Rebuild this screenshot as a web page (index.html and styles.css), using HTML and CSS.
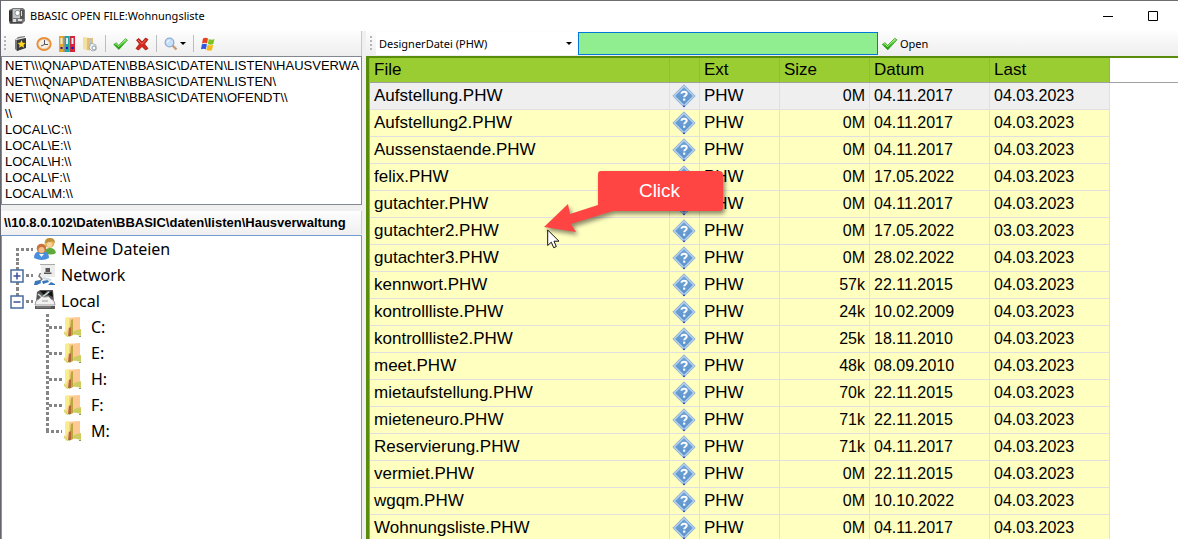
FILE: index.html
```html
<!DOCTYPE html>
<html lang="de">
<head>
<meta charset="utf-8">
<title>BBASIC OPEN FILE:Wohnungsliste</title>
<link rel="stylesheet" href="styles.css">
</head>
<body>
<svg class="defs" aria-hidden="true">
  <defs>
    <linearGradient id="gem" x1="0" y1="0" x2="0" y2="1"><stop offset="0" stop-color="#6ea3d6"/><stop offset="1" stop-color="#5c93cc"/></linearGradient>
    <linearGradient id="leaf" x1="0" y1="0" x2="0" y2="1"><stop offset="0" stop-color="#a5f07c"/><stop offset=".5" stop-color="#3cc21c"/><stop offset="1" stop-color="#1f8f12"/></linearGradient>
  </defs>
  <symbol id="help" viewBox="0 0 24 24">
    <path d="M12 .8 23.2 12 12 23.2.8 12Z" fill="#b4d0ec" stroke="#8fb0d4" stroke-width="1"/>
    <path d="M12 3.2 20.8 12 12 20.8 3.2 12Z" fill="url(#gem)"/>
    <path d="M11 21.5h2v1.5h-2z" fill="#3c55c0"/>
    <path d="M9.500 9.800c0-1.400 1-2.100 2.600-2.100s2.600.7 2.600 2c0 1.800-2.500 1.800-2.500 3.600" fill="none" stroke="#fff" stroke-width="2"/>
    <path d="M11.100 14.600h2.200v2.100h-2.200z" fill="#fff"/>
  </symbol>
  <symbol id="check" viewBox="0 0 16 14">
    <path d="M.8 7.500 3.600 5.700 6 8.600 13.300 1.300 15.400 2.800 6.300 12.800Z" fill="url(#leaf)" stroke="#2a9a1c" stroke-width=".8" stroke-linejoin="round"/>
    <path d="M2.300 7.300 3.500 6.600 6 9.700 13.300 2.400" fill="none" stroke="#c4f7a8" stroke-width=".8"/>
  </symbol>
  <symbol id="folder" viewBox="0 0 20 22">
    <path d="M2 2 17 1V18L3 20Z" fill="#ffc993"/>
    <path d="M2 2 6 1V10L3 17H2Z" fill="#f8ee8a"/>
    <path d="M8 4 10 3V19L6 21Z" fill="#b9a93c"/>
    <path d="M6 12 8 11V20H5Z" fill="#b0683a"/>
    <path d="M11 15 18 13V20L10 18Z" fill="#cccc60"/>
    <path d="M1 15 6 21H4L1 18Z" fill="#d6dc6a"/>
    <path d="M16 20h2v1h-2z" fill="#8a9a70"/>
  </symbol>
</svg>

<div class="window">
  <header class="titlebar">
    <svg width="16" height="16" viewBox="0 0 16 16" aria-hidden="true">
      <path d="M0 2 4 0H14L16 2V13L13 16H1L0 14Z" fill="#777"/>
      <path d="M0 3 3 2V14L0 13Z" fill="#333"/><path d="M4 1h7v9H4z" fill="#bfc5ca"/>
      <circle cx="8.500" cy="5" r="2.600" fill="#fff" stroke="#888"/><path d="M11 2h4v9h-4z" fill="#555"/>
      <path d="M12 3h1v5h-1zM4 11h3v3H4zM9 11h4v2H9z" fill="#ddd"/><path d="M1 14h12v1H1z" fill="#444"/>
    </svg>
    <h1 class="title">BBASIC OPEN FILE:Wohnungsliste</h1>
    <div class="window-buttons">
      <button class="win-btn" aria-label="Minimieren"><svg width="10" height="10"><path d="M0 5.500h10" stroke="#000"/></svg></button>
      <button class="win-btn" aria-label="Maximieren"><svg width="10" height="10"><path d="M.5.5h9v9h-9z" fill="none" stroke="#000"/></svg></button>
    </div>
  </header>

  <div class="panes">
    <aside class="side">
      <div class="toolbar side-tools">
        <span class="grip"></span>
        <button class="tool" aria-label="Favoriten"><svg width="16" height="16" viewBox="0 0 16 16"><path d="M2 4 5 1 12 0V11L4 15 2 13Z" fill="#777"/><path d="M4 4 13 2V12L4 15Z" fill="#3a3a3a"/><path d="M3 3.500 12 1.500" stroke="#eee"/><path d="M8.500 4l1.200 2.700 2.800.2-2 2 .6 2.800-2.600-1.500-2.400 1.500.5-2.800-2-2 2.700-.2Z" fill="#ffd91f"/></svg></button>
        <button class="tool" aria-label="Zuletzt verwendet"><svg width="16" height="16" viewBox="0 0 16 16"><ellipse cx="8" cy="8" rx="6.700" ry="6" fill="#fbeedd" stroke="#ea8e36" stroke-width="1.800"/><ellipse cx="8" cy="8" rx="5.500" ry="4.800" fill="none" stroke="#c9b299" stroke-width=".5"/><path d="M8.500 4V8.500H12M8.500 8.500 5 10" fill="none" stroke="#4a5770"/></svg></button>
        <button class="tool" aria-label="Ordner"><svg width="16" height="16" viewBox="0 0 16 16"><path d="M0 0h5v16H0z" fill="#e6a82c"/><path d="M5.500 0h5v16h-5z" fill="#1fa6a8"/><path d="M11 0h5v16h-5z" fill="#d6223a"/><path d="M1.500 2h2v6h-2zM7 2h2v6H7zM12.500 2h2v6h-2z" fill="#dff0f4"/><path d="M1.500 11h2v2h-2zM7 11h2v2H7zM12.500 11h2v2h-2z" fill="#1515c8"/><path d="M5.200 0v16M10.800 0v16" stroke="#8a5a42" stroke-width=".7"/></svg></button>
        <button class="tool" aria-label="Ordner durchsuchen"><svg width="16" height="16" viewBox="0 0 16 16"><path d="M1 1 8 2V15L1 13Z" fill="#f3df9e"/><path d="M5 2h6v12H5z" fill="#e2c077"/><path d="M7 3h3v10H7z" fill="#b9c4cf"/><path d="M9 7 14 9V14L10 15 7 12Z" fill="#eef2f5" stroke="#8b9bab" stroke-width=".7"/><circle cx="12" cy="12" r="2" fill="#fff" stroke="#8b9bab"/></svg></button>
        <span class="sep"></span>
        <button class="tool" aria-label="OK"><svg width="15" height="14"><use href="#check"/></svg></button>
        <button class="tool" aria-label="Abbrechen"><svg width="14" height="14" viewBox="0 0 14 14"><path d="M1.500 3 4 1.500 7 5 10.500 1 13 2.500 9.500 7 13 11.500 10.500 13 7 9.500 3.500 13 1 11.500 4.500 7Z" fill="#d8261c" stroke="#9c150e" stroke-width=".8"/><path d="M3 3 7 7 10.500 3" fill="none" stroke="#f3796c" stroke-width=".8"/></svg></button>
        <span class="sep"></span>
        <button class="tool" aria-label="Suchen"><svg width="14" height="14" viewBox="0 0 14 14"><path d="M8.500 8.500 12.500 12.500" stroke="#c89a70" stroke-width="2.400"/><circle cx="5.500" cy="5.500" r="4.300" fill="#c8e0f8" stroke="#8fabd4" stroke-width="1.300"/><path d="M3.500 5.500a2 2 0 0 1 2-2" stroke="#fff" fill="none"/></svg><span class="caret"></span></button>
        <span class="sep"></span>
        <button class="tool" aria-label="Windows"><svg width="14" height="14" viewBox="0 0 14 14"><path d="M2 1.500Q4.500 0 7 1.500L6 6.500Q3.500 5 1 6.500Z" fill="#e8401c"/><path d="M7.800 2Q10.500 3.500 13.500 2L12.300 7Q9.500 8.500 6.800 7Z" fill="#7cc420"/><path d="M.9 7.300Q3.500 6 5.900 7.300L4.800 12.300Q2.500 11 0 12.300Z" fill="#2b56dd"/><path d="M6.500 7.800Q9.500 9.300 12.200 7.800L11 13Q8.500 14.300 5.400 13Z" fill="#f5b816"/></svg></button>
      </div>

      <ul class="places">
        <li>NET\\\QNAP\DATEN\BBASIC\DATEN\LISTEN\HAUSVERWA</li>
        <li>NET\\\QNAP\DATEN\BBASIC\DATEN\LISTEN\</li>
        <li>NET\\\QNAP\DATEN\BBASIC\DATEN\OFENDT\\</li>
        <li>\\</li>
        <li>LOCAL\C:\\</li>
        <li>LOCAL\E:\\</li>
        <li>LOCAL\H:\\</li>
        <li>LOCAL\F:\\</li>
        <li>LOCAL\M:\\</li>
      </ul>

      <div class="path">\\10.8.0.102\Daten\BBASIC\daten\listen\Hausverwaltung</div>

      <ul class="tree">
        <li class="node">
          <svg width="31" height="26"><path class="dots" d="M15.500 12V26M14 13.500H31"/></svg>
          <svg width="24" height="24" viewBox="0 0 24 24"><path d="M12 16q0-5 5-5t6 5q-5 3-11 0Z" fill="#5caa3c"/><circle cx="16.500" cy="6" r="5" fill="#e2b65c"/><path d="M12 6q0-5 5-5t5 5q-3-3-5-1Z" fill="#c09038"/><circle cx="16.500" cy="7.500" r="2.600" fill="#f6d29c"/><path d="M1 21q0-7 7.500-7t7.500 7q-7 4-15 0Z" fill="#4a8fdc"/><circle cx="8.500" cy="11.500" r="4.800" fill="#c9733a"/><circle cx="8.500" cy="13" r="3" fill="#f3bf8e"/><path d="M6 17l2.500 3 2.500-3Z" fill="#fff"/></svg>
          <span>Meine Dateien</span>
        </li>
        <li class="node">
          <svg width="31" height="26"><path class="dots" d="M15.500 0V26M24 13.500H31"/><path d="M9 8h12v12H9z" fill="#fff" stroke="#486ca0" stroke-width="1.500"/><path d="M11.500 14h7M15 10.500v7" stroke="#3a4fa0" stroke-width="1.500"/></svg>
          <svg width="24" height="24" viewBox="0 0 24 24"><path d="M8 2H22V14H8Z" fill="#ececec"/><path d="M7 1.500H22" stroke="#aaa"/><path d="M12.500 5h4.500v4H12.500zM11 9.500h7.500v1.500H11z" fill="#555"/><path d="M7.500 10 6 13 9 16 6 19" fill="none" stroke="#777" stroke-width="1.500"/><path d="M1 22 2 18 7 17 8 20 4 22ZM9 18l6-1 1 2-6 2ZM15 22l3-3 4 2v1Z" fill="#3677bd"/><path d="M10 15l8 2" stroke="#ccd9e6" stroke-width="2"/></svg>
          <span>Network</span>
        </li>
        <li>
          <div class="node">
            <svg width="31" height="26"><path class="dots" d="M15.500 0V8M24 13.500H31"/><path d="M9 8h12v12H9z" fill="#fff" stroke="#486ca0" stroke-width="1.500"/><path d="M11.500 14h7" stroke="#3a4fa0" stroke-width="1.500"/></svg>
            <svg width="24" height="24" viewBox="0 0 24 24"><path d="M4 3 7 1H20L21 13H3Z" fill="#555"/><path d="M7 2h7l-3 4ZM14 5l5-3 1 6Z" fill="#111"/><path d="M5 5 9 8 16 3" stroke="#cfdede" stroke-width="1.500" fill="none"/><path d="M2 16Q2 11 6 10Q8 6 12 8Q16 6 18 10Q22 11 22 16Z" fill="#f2f2f2" stroke="#888" stroke-width=".8"/><path d="M9 12h6" stroke="#999"/><path d="M2 17H22V20H2Z" fill="#555"/><path d="M3 18h15" stroke="#999"/></svg>
            <span>Local</span>
          </div>
          <ul class="leaves">
            <li class="node"><svg width="60" height="26"><path class="dots" d="M45.500 0V26M47 13.500H60"/></svg><svg width="22" height="22"><use href="#folder"/></svg><span>C:</span></li>
            <li class="node"><svg width="60" height="26"><path class="dots" d="M45.500 0V26M47 13.500H60"/></svg><svg width="22" height="22"><use href="#folder"/></svg><span>E:</span></li>
            <li class="node"><svg width="60" height="26"><path class="dots" d="M45.500 0V26M47 13.500H60"/></svg><svg width="22" height="22"><use href="#folder"/></svg><span>H:</span></li>
            <li class="node"><svg width="60" height="26"><path class="dots" d="M45.500 0V26M47 13.500H60"/></svg><svg width="22" height="22"><use href="#folder"/></svg><span>F:</span></li>
            <li class="node"><svg width="60" height="26"><path class="dots" d="M45.500 0V14M44 13.500H60"/></svg><svg width="22" height="22"><use href="#folder"/></svg><span>M:</span></li>
          </ul>
        </li>
      </ul>
    </aside>

    <main class="main">
      <div class="toolbar main-tools">
        <span class="grip"></span>
        <div class="filter">
          <select class="filter-select" aria-label="Dateityp"><option>DesignerDatei (PHW)</option></select>
          <span class="caret"></span>
        </div>
        <input class="search-box" type="text" aria-label="Dateiname">
        <button class="open"><svg width="17" height="14"><use href="#check"/></svg>Open</button>
      </div>

      <div class="files-wrap">
        <div class="head-fill"></div>
        <table class="files">
          <colgroup><col class="c-file"><col class="c-icon"><col class="c-ext"><col class="c-size"><col class="c-date"><col class="c-date"></colgroup>
          <thead><tr><th>File</th><th></th><th>Ext</th><th>Size</th><th>Datum</th><th>Last</th></tr></thead>
          <tbody>
            <tr class="current"><td>Aufstellung.PHW</td><td><svg><use href="#help"/></svg></td><td>PHW</td><td>0M</td><td>04.11.2017</td><td>04.03.2023</td></tr>
            <tr><td>Aufstellung2.PHW</td><td><svg><use href="#help"/></svg></td><td>PHW</td><td>0M</td><td>04.11.2017</td><td>04.03.2023</td></tr>
            <tr><td>Aussenstaende.PHW</td><td><svg><use href="#help"/></svg></td><td>PHW</td><td>0M</td><td>04.11.2017</td><td>04.03.2023</td></tr>
            <tr><td>felix.PHW</td><td><svg><use href="#help"/></svg></td><td>PHW</td><td>0M</td><td>17.05.2022</td><td>04.03.2023</td></tr>
            <tr><td>gutachter.PHW</td><td><svg><use href="#help"/></svg></td><td>PHW</td><td>0M</td><td>04.11.2017</td><td>04.03.2023</td></tr>
            <tr><td>gutachter2.PHW</td><td><svg><use href="#help"/></svg></td><td>PHW</td><td>0M</td><td>17.05.2022</td><td>03.03.2023</td></tr>
            <tr><td>gutachter3.PHW</td><td><svg><use href="#help"/></svg></td><td>PHW</td><td>0M</td><td>28.02.2022</td><td>04.03.2023</td></tr>
            <tr><td>kennwort.PHW</td><td><svg><use href="#help"/></svg></td><td>PHW</td><td>57k</td><td>22.11.2015</td><td>04.03.2023</td></tr>
            <tr><td>kontrollliste.PHW</td><td><svg><use href="#help"/></svg></td><td>PHW</td><td>24k</td><td>10.02.2009</td><td>04.03.2023</td></tr>
            <tr><td>kontrollliste2.PHW</td><td><svg><use href="#help"/></svg></td><td>PHW</td><td>25k</td><td>18.11.2010</td><td>04.03.2023</td></tr>
            <tr><td>meet.PHW</td><td><svg><use href="#help"/></svg></td><td>PHW</td><td>48k</td><td>08.09.2010</td><td>04.03.2023</td></tr>
            <tr><td>mietaufstellung.PHW</td><td><svg><use href="#help"/></svg></td><td>PHW</td><td>70k</td><td>22.11.2015</td><td>04.03.2023</td></tr>
            <tr><td>mieteneuro.PHW</td><td><svg><use href="#help"/></svg></td><td>PHW</td><td>71k</td><td>22.11.2015</td><td>04.03.2023</td></tr>
            <tr><td>Reservierung.PHW</td><td><svg><use href="#help"/></svg></td><td>PHW</td><td>71k</td><td>04.11.2017</td><td>04.03.2023</td></tr>
            <tr><td>vermiet.PHW</td><td><svg><use href="#help"/></svg></td><td>PHW</td><td>0M</td><td>22.11.2015</td><td>04.03.2023</td></tr>
            <tr><td>wgqm.PHW</td><td><svg><use href="#help"/></svg></td><td>PHW</td><td>0M</td><td>10.10.2022</td><td>04.03.2023</td></tr>
            <tr><td>Wohnungsliste.PHW</td><td><svg><use href="#help"/></svg></td><td>PHW</td><td>0M</td><td>04.11.2017</td><td>04.03.2023</td></tr>
          </tbody>
        </table>

        <div class="callout">
          <svg class="callout-shape" width="190" height="90" viewBox="0 0 190 90" aria-hidden="true">
            <path d="M60 5H178a4 4 0 0 1 4 4V41a4 4 0 0 1-4 4H72L30 58 35 66 3 61 27 38 29 48 57 39V8a3 3 0 0 1 3-3Z" fill="#ff4444"/>
          </svg>
          <span class="callout-text">Click</span>
          <svg class="pointer" width="13" height="20" viewBox="0 0 13 20" aria-hidden="true"><path d="M.7 1V16.500L4.300 13.200 6.700 18.700 9.300 17.600 7 12.200H12Z" fill="#fff" stroke="#111"/></svg>
        </div>
      </div>
    </main>
  </div>
</div>
</body>
</html>
```
FILE: styles.css
```css
* { box-sizing: border-box; }

body {
  margin: 0;
  background: #fff;
  color: #000;
  font: 11px/16px "Noto Sans", "Open Sans", sans-serif;
}

ul { list-style: none; margin: 0; padding: 0; }
button { border: 0; background: none; padding: 0; font: inherit; color: inherit; }
svg { display: block; flex: none; }
.defs { position: absolute; width: 0; height: 0; }

.window {
  display: flex;
  flex-direction: column;
  height: 100vh;
  overflow: hidden;
  border-top: 1px solid #6e6e6e;
  border-left: 1px solid #66666e;
}

.titlebar { display: flex; align-items: center; height: 30px; flex: none; padding-left: 8px; }
.title { margin: 0 0 0 5px; font-size: 11px; font-weight: 400; }
.window-buttons { display: flex; margin-left: auto; padding-right: 3px; }
.win-btn { display: flex; align-items: center; justify-content: center; width: 45px; height: 30px; }

.panes { display: flex; flex: 1; min-height: 0; background: #f0f0f0; }
.side { display: flex; flex-direction: column; width: 361px; flex: none; margin-right: 4px; }
.main { display: flex; flex-direction: column; flex: 1; min-width: 0; }

.toolbar {
  display: flex;
  align-items: center;
  height: 25px;
  flex: none;
  background: linear-gradient(#fdfdfd, #eeeeee);
}
.side-tools { gap: 7px; padding-left: 3px; border-right: 1px solid #c8c8c8; }
.grip { width: 2px; height: 15px; background: repeating-linear-gradient(#b4b4b4 0 2px, transparent 2px 4px); }
.tool { display: flex; align-items: center; gap: 2px; }
.sep { width: 1px; height: 17px; background: #bdbdbd; }
.caret { border: 3px solid transparent; border-top-color: #000; border-bottom: 0; }

.places {
  height: 149px;
  flex: none;
  overflow: hidden;
  padding: 1px 0 0 3px;
  background: #fff;
  border: 1px solid #828790;
  font: 13px/16px "Liberation Sans", Arial, sans-serif;
  white-space: nowrap;
}

.path {
  flex: none;
  height: 23px;
  margin: 6px 0 1px;
  padding-left: 3px;
  overflow: hidden;
  white-space: nowrap;
  background: linear-gradient(#fdfdfd, #f0f0f0);
  border-right: 1px solid #c8c8c8;
  font: bold 13px/24px "Liberation Sans", Arial, sans-serif;
}

.tree { flex: 1; background: #fff; border: 1px solid #6f9bd1; border-bottom: 0; font-size: 16px; }
.node { display: flex; align-items: center; height: 26px; }
.node span { margin-left: 4px; }
.leaves span { margin-left: 7px; }
.dots { fill: none; stroke: #858585; stroke-width: 3; stroke-dasharray: 3 2; }

.main-tools { padding-left: 4px; }
.filter { display: flex; align-items: center; width: 202px; height: 23px; margin-left: 4px; padding-right: 6px; background: #fff; }
.filter-select {
  flex: 1;
  appearance: none;
  border: 0;
  padding: 0 3px;
  background: transparent;
  font: inherit;
  color: #000;
}
.search-box { width: 300px; height: 23px; border: 1px solid #0078d7; background: #90ee90; padding: 0 4px; font: inherit; }
.open { display: flex; align-items: center; gap: 2px; margin-left: 3px; }

.files-wrap {
  position: relative;
  flex: 1;
  min-height: 0;
  overflow: hidden;
  background: #fff;
  border-left: 3px solid #5a8c0c;
  border-top: 2px solid #5a8c0c;
}
.head-fill { height: 25px; margin-bottom: -25px; border-bottom: 1px solid #a0a0a0; }
.files {
  position: relative;
  table-layout: fixed;
  width: 741px;
  border-collapse: separate;
  border-spacing: 0;
  border-left: 1px solid #a0a0a0;
  font: 17px/20px "Liberation Sans", Arial, sans-serif;
}
.c-file { width: 300px; }
.c-icon { width: 30px; }
.c-ext { width: 80px; }
.c-size { width: 90px; }
.c-date { width: 120px; }
.files th {
  height: 25px;
  padding: 0 4px;
  background: #9acd32;
  border-right: 1px solid #a0a0a0;
  border-bottom: 1px solid #a0a0a0;
  font-weight: 400;
  text-align: left;
}
.files td {
  height: 27px;
  padding: 0 4px;
  background: #ffffc0;
  border-right: 1px solid #e0e0e0;
  border-bottom: 1px solid #e0e0e0;
}
.files .current td { background: #efefef; }
.files td:nth-child(2) { padding: 0 2px; }
.files td:nth-child(4) { text-align: right; }
.files td:nth-child(n+4) { font-size: 16px; }
.files td svg { width: 24px; height: 24px; }

.callout { position: absolute; left: 172px; top: 108px; width: 190px; height: 90px; }
.callout-shape { filter: drop-shadow(2px 3px 2px rgba(0, 0, 0, .45)); }
.callout-text {
  position: absolute;
  left: 56px;
  top: 5px;
  width: 125px;
  color: #fff;
  font: 19px/40px "Liberation Sans", Arial, sans-serif;
  text-align: center;
}
.pointer { position: absolute; left: 6px; top: 63px; }
```
